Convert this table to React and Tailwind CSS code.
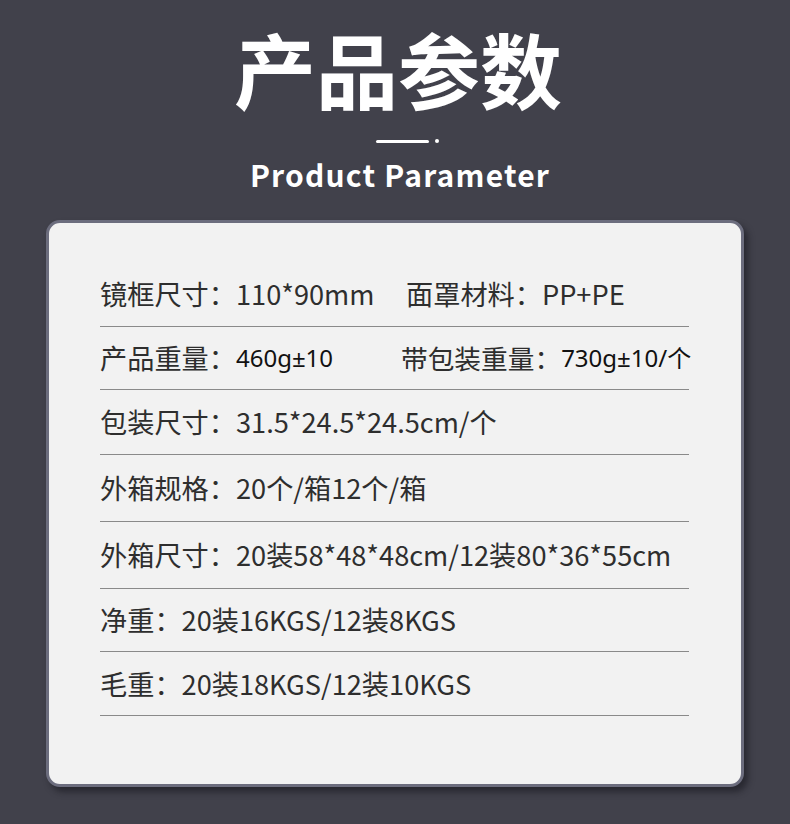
import React from "react";

const rows = [
  { h: "h-[65px]", cells: [{ label: "镜框尺寸：", value: "110*90mm", w: "w-[306px]" }, { label: "面罩材料：", value: "PP+PE" }] },
  { h: "h-[63px]", cells: [{ label: "产品重量：", value: "460g±10", w: "w-[301px]", dark: true }, { label: "带包装重量：", value: "730g±10/个", dark: true, tight: true }] },
  { h: "h-[65px]", cells: [{ label: "包装尺寸：", value: "31.5*24.5*24.5cm/个" }] },
  { h: "h-[67px]", cells: [{ label: "外箱规格：", value: "20个/箱12个/箱" }] },
  { h: "h-[67px]", cells: [{ label: "外箱尺寸：", value: "20装58*48*48cm/12装80*36*55cm" }] },
  { h: "h-[63px]", cells: [{ label: "净重：", value: "20装16KGS/12装8KGS" }] },
  { h: "h-[64px]", cells: [{ label: "毛重：", value: "20装18KGS/12装10KGS" }] },
];

export default function App() {
  return (
    <div className="w-[790px] h-[824px] bg-[#41414b] flex flex-col items-center font-['Noto_Sans_CJK_SC','Noto_Sans',sans-serif] overflow-hidden">
      <h1 className="mt-[27px] ml-[6px] text-[82px] leading-none font-bold text-white">
        产品参数
      </h1>
      <div className="mt-[30px] ml-[24px] flex items-center gap-[6px]">
        <div className="w-[53px] h-[3px] rounded-full bg-white" />
        <div className="w-[4px] h-[4px] rounded-full bg-white" />
      </div>
      <div className="mt-[16px] ml-[10px] text-[30px] leading-none font-bold text-white tracking-[1.2px]">
        Product Parameter
      </div>

      <div className="mt-[31px] w-[698px] h-[567px] rounded-[14px] border-[3px] border-[#6c6d7e] bg-[#f2f2f2] shadow-[4px_5px_6px_rgba(20,20,28,0.55)] pl-[51px] pr-[52px] pt-[39px]">
        {rows.map((r, i) => (
          <div key={i} className={`${r.h} flex items-center border-b-[1.5px] border-[#8a8a8a]`}>
            {r.cells.map((c, j) => (
              <div key={j} className={`${c.w || ""} shrink-0 flex items-center ${c.tight ? "text-[26.7px]" : "text-[27.2px]"} leading-none text-[#2e2e2e] whitespace-nowrap`}>
                <span>{c.label}</span>
                <span className={c.dark ? "text-[24px] text-[#111] font-['Noto_Sans','Noto_Sans_CJK_SC',sans-serif]" : ""}>{c.value}</span>
              </div>
            ))}
          </div>
        ))}
      </div>
    </div>
  );
}
